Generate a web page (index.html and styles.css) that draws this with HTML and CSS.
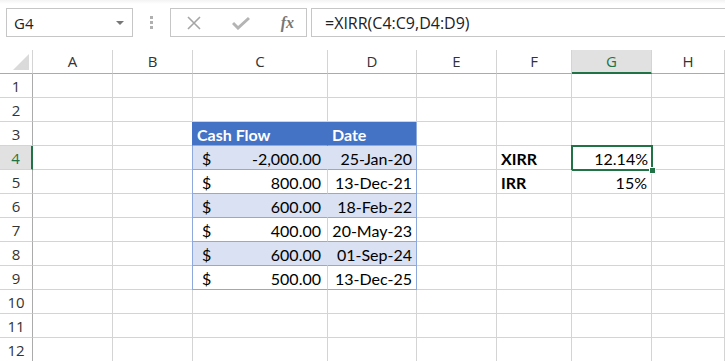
FILE: index.html
```html
<!DOCTYPE html>
<html lang="en">
<head>
    <meta charset="UTF-8">
    <title>XIRR</title>
    <link rel="stylesheet" href="styles.css">
</head>
<body>

<div class="toolbar">
    <div class="namebox">
        <span>G4</span>
        <span class="caret"></span>
    </div>
    <div class="grip"><i></i><i></i><i></i></div>
    <div class="fxbuttons">
        <svg width="14" height="14" viewBox="0 0 14 14"><path d="M1 1 L13 13 M13 1 L1 13" stroke="#a6a6a6" stroke-width="1.6" fill="none"/></svg>
        <svg width="18" height="14" viewBox="0 0 18 14"><path d="M1 7 L6 12 L17 2" stroke="#b4b4b4" stroke-width="3" fill="none"/></svg>
        <span class="fx">fx</span>
    </div>
    <div class="formula">=XIRR(C4:C9,D4:D9)</div>
</div>

<div class="sheet">
    <div class="corner"><span></span></div>
    <div class="colhead">A</div>
    <div class="colhead">B</div>
    <div class="colhead">C</div>
    <div class="colhead">D</div>
    <div class="colhead">E</div>
    <div class="colhead">F</div>
    <div class="colhead active">G</div>
    <div class="colhead">H</div>

    <div class="rowhead">1</div>
    <div class="cell"></div><div class="cell"></div><div class="cell"></div><div class="cell"></div>
    <div class="cell"></div><div class="cell"></div><div class="cell"></div><div class="cell"></div>

    <div class="rowhead">2</div>
    <div class="cell"></div><div class="cell"></div><div class="cell"></div><div class="cell"></div>
    <div class="cell"></div><div class="cell"></div><div class="cell"></div><div class="cell"></div>

    <div class="rowhead">3</div>
    <div class="cell"></div><div class="cell"></div>
    <div class="cell thead first">Cash Flow</div>
    <div class="cell thead last">Date</div>
    <div class="cell"></div><div class="cell"></div><div class="cell"></div><div class="cell"></div>

    <div class="rowhead active">4</div>
    <div class="cell"></div><div class="cell"></div>
    <div class="cell trow band first money"><span>$</span><span>-2,000.00</span></div>
    <div class="cell trow band last num">25-Jan-20</div>
    <div class="cell"></div>
    <div class="cell bold">XIRR</div>
    <div class="cell num selected">12.14%<span class="handle"></span></div>
    <div class="cell"></div>

    <div class="rowhead">5</div>
    <div class="cell"></div><div class="cell"></div>
    <div class="cell trow first money"><span>$</span><span>800.00</span></div>
    <div class="cell trow last num">13-Dec-21</div>
    <div class="cell"></div>
    <div class="cell bold">IRR</div>
    <div class="cell num">15%</div>
    <div class="cell"></div>

    <div class="rowhead">6</div>
    <div class="cell"></div><div class="cell"></div>
    <div class="cell trow band first money"><span>$</span><span>600.00</span></div>
    <div class="cell trow band last num">18-Feb-22</div>
    <div class="cell"></div><div class="cell"></div><div class="cell"></div><div class="cell"></div>

    <div class="rowhead">7</div>
    <div class="cell"></div><div class="cell"></div>
    <div class="cell trow first money"><span>$</span><span>400.00</span></div>
    <div class="cell trow last num">20-May-23</div>
    <div class="cell"></div><div class="cell"></div><div class="cell"></div><div class="cell"></div>

    <div class="rowhead">8</div>
    <div class="cell"></div><div class="cell"></div>
    <div class="cell trow band first money"><span>$</span><span>600.00</span></div>
    <div class="cell trow band last num">01-Sep-24</div>
    <div class="cell"></div><div class="cell"></div><div class="cell"></div><div class="cell"></div>

    <div class="rowhead">9</div>
    <div class="cell"></div><div class="cell"></div>
    <div class="cell trow first money"><span>$</span><span>500.00</span></div>
    <div class="cell trow last num">13-Dec-25</div>
    <div class="cell"></div><div class="cell"></div><div class="cell"></div><div class="cell"></div>

    <div class="rowhead">10</div>
    <div class="cell"></div><div class="cell"></div><div class="cell"></div><div class="cell"></div>
    <div class="cell"></div><div class="cell"></div><div class="cell"></div><div class="cell"></div>

    <div class="rowhead">11</div>
    <div class="cell"></div><div class="cell"></div><div class="cell"></div><div class="cell"></div>
    <div class="cell"></div><div class="cell"></div><div class="cell"></div><div class="cell"></div>

    <div class="rowhead">12</div>
    <div class="cell"></div><div class="cell"></div><div class="cell"></div><div class="cell"></div>
    <div class="cell"></div><div class="cell"></div><div class="cell"></div><div class="cell"></div>
</div>

</body>
</html>
```

FILE: styles.css
```css
body {
    margin: 0;
    background: #fff;
    overflow: hidden;
    font-family: "Open Sans", "Noto Sans", sans-serif;
}
.toolbar {
    height: 50px;
    box-sizing: border-box;
    padding: 8px 0 0 6px;
    display: flex;
    align-items: flex-start;
    background: linear-gradient(to bottom, #f3f3f3 0px, #fff 4px);
}
.namebox {
    width: 127px;
    height: 29px;
    box-sizing: border-box;
    border: 1px solid #c6c6c6;
    display: flex;
    align-items: center;
    justify-content: space-between;
    padding: 0 8px 0 7px;
    font-size: 15px;
    color: #222;
}
.caret {
    width: 0;
    height: 0;
    border-left: 4px solid transparent;
    border-right: 4px solid transparent;
    border-top: 4px solid #777;
}
.grip {
    width: 37px;
    height: 29px;
    display: flex;
    flex-direction: column;
    align-items: center;
    justify-content: center;
    gap: 2px;
}
.grip i {
    width: 3px;
    height: 3px;
    background: #b0b0b0;
}
.fxbuttons {
    width: 137px;
    height: 29px;
    box-sizing: border-box;
    border: 1px solid #c6c6c6;
    display: flex;
    align-items: center;
    padding: 0 12px 0 16px;
    justify-content: space-between;
}
.fx {
    font-family: "Liberation Serif", serif;
    font-style: italic;
    font-weight: bold;
    font-size: 16px;
    color: #777;
}
.formula {
    flex: 1;
    height: 29px;
    box-sizing: border-box;
    margin-left: 4px;
    border: 1px solid #c6c6c6;
    border-right: none;
    padding: 3px 0 0 13px;
    font-size: 16px;
    color: #222;
}
.sheet {
    display: grid;
    grid-template-columns: 33px 80px 80px 135px 89px 80px 75px 80px 73px;
    grid-template-rows: repeat(13, 24px);
}
.corner {
    border-right: 1px solid #d4d4d4;
    border-bottom: 1px solid #ababab;
    position: relative;
}
.corner span {
    position: absolute;
    right: 3px;
    bottom: 3px;
    width: 0;
    height: 0;
    border-left: 16px solid transparent;
    border-bottom: 16px solid #dadada;
}
.colhead {
    box-sizing: border-box;
    border-right: 1px solid #d4d4d4;
    border-bottom: 1px solid #ababab;
    text-align: center;
    font-size: 15px;
    line-height: 23px;
    color: #333;
}
.colhead.active {
    background: #e1e1e1;
    color: #217346;
    border-bottom: 2px solid #217346;
}
.rowhead {
    box-sizing: border-box;
    border-right: 1px solid #ababab;
    border-bottom: 1px solid #d4d4d4;
    text-align: center;
    font-size: 15px;
    line-height: 24px;
    color: #333;
}
.rowhead.active {
    background: #e1e1e1;
    color: #217346;
    border-right: 2px solid #217346;
}
.cell {
    box-sizing: border-box;
    border-right: 1px solid #d4d4d4;
    border-bottom: 1px solid #d4d4d4;
    font-family: "Lato", "Liberation Sans", sans-serif;
    font-size: 16px;
    line-height: 23px;
    padding: 1px 4px 0 4px;
    color: #000;
    white-space: nowrap;
    position: relative;
}
.bold {
    font-weight: bold;
}
.num {
    text-align: right;
}
.money {
    display: flex;
    justify-content: space-between;
    padding-left: 9px;
    padding-right: 6px;
}
.thead {
    background: #4472c4;
    color: #fff;
    font-weight: bold;
    border-right-color: #4472c4;
    border-bottom-color: #8ea9db;
}
.trow {
    border-bottom-color: #8ea9db;
}
.trow.band {
    background: #d9e1f2;
    border-right-color: #d9e1f2;
}
.first {
    border-left: 1px solid #8ea9db;
    margin-left: -1px;
}
.thead.first {
    border-left-color: #4472c4;
}
.last {
    border-right-color: #8ea9db !important;
}
.selected {
    border: none;
}
.selected::after {
    content: "";
    position: absolute;
    left: -1px;
    top: -1px;
    right: -1px;
    bottom: -1px;
    border: 2px solid #217346;
}
.handle {
    position: absolute;
    right: -4px;
    bottom: -4px;
    width: 5px;
    height: 5px;
    background: #217346;
    border: 1px solid #fff;
    z-index: 2;
}
```
